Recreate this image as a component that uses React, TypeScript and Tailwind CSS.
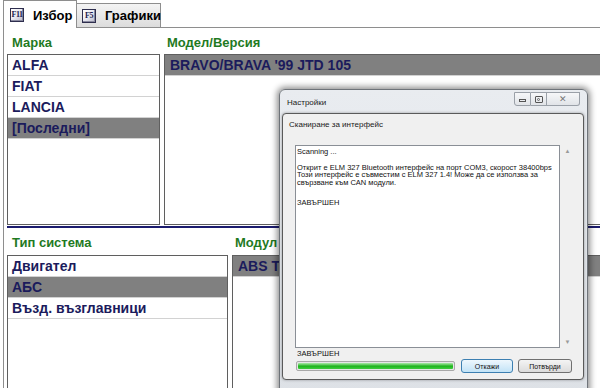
import React from "react";

const Row = ({ label, sel, pl }: { label: string; sel?: boolean; pl?: string }) => (
  <div
    className={`h-[21px] shrink-0 border-b border-[#d2d2d2] ${pl ?? "pl-[4px]"} text-[14px] font-bold leading-[21px] text-[#1b1b5c] whitespace-nowrap ${
      sel ? "bg-[#808080]" : "bg-white"
    }`}
  >
    {label}
  </div>
);

const KeyIcon = ({ k }: { k: string }) => (
  <div className="flex h-[14px] w-[14px] shrink-0 items-center justify-center border border-[#2e2e4e] bg-linear-to-br from-[#ffffff] via-[#e8e8f0] to-[#b8b8c8] shadow-[inset_-1px_-1px_0_#8a8aa0] text-[8px] font-bold leading-none tracking-[-0.5px] text-[#1b1b4c] font-['Liberation_Serif',serif]">
    {k}
  </div>
);

export default function App() {
  return (
    <div className="relative h-[388px] w-[600px] overflow-hidden bg-white font-['Liberation_Sans',Arial,sans-serif]">
      {/* Tabs */}
      <div className="flex h-[28px] items-end pl-[3px]">
        <div className="relative z-10 flex h-[28px] w-[74px] items-center gap-[9px] border border-b-0 border-[#8e8e8e] bg-white pl-[6px] pt-[1px]">
          <KeyIcon k="F11" />
          <span className="text-[13px] font-bold leading-none text-black">Избор</span>
        </div>
        <div className="flex h-[25px] w-[84px] items-center gap-[9px] border border-l-0 border-[#8e8e8e] bg-linear-to-b from-[#f4f4f4] to-[#dcdcdc] pl-[5px]">
          <KeyIcon k="F5" />
          <span className="text-[13px] font-bold leading-none text-black">Графики</span>
        </div>
        <div className="h-[1px] flex-1 bg-[#8e8e8e]" />
      </div>

      {/* Main panel */}
      <div className="ml-[3px] h-[360px] border-l border-[#8e8e8e] pl-[3px]">
        {/* Top section */}
        <div className="grid grid-cols-[153px_1fr] gap-x-[4px]">
          <div className="h-[26px] pl-[5px] pt-[7px] text-[13px] font-bold leading-[15px] text-[#1f7a1f]">Марка</div>
          <div className="h-[26px] pl-[3px] pt-[7px] text-[13px] font-bold leading-[15px] text-[#1f7a1f]">Модел/Версия</div>
          <div className="flex h-[171px] flex-col border border-[#5f5f5f] bg-white">
            <Row label="ALFA" />
            <Row label="FIAT" />
            <Row label="LANCIA" />
            <Row label="[Последни]" sel />
          </div>
          <div className="flex h-[171px] flex-col border border-r-0 border-[#5f5f5f] bg-white">
            <Row label="BRAVO/BRAVA '99 JTD 105" sel pl="pl-[5px]" />
          </div>
        </div>

        <div className="mt-[1px] h-[2px] bg-[#1c1c6e]" />

        {/* Bottom section */}
        <div className="grid grid-cols-[221px_1fr] gap-x-[4px]">
          <div className="h-[27px] pl-[5px] pt-[7px] text-[13px] font-bold leading-[15px] text-[#1f7a1f]">Тип система</div>
          <div className="h-[27px] pl-[3px] pt-[7px] text-[13px] font-bold leading-[15px] text-[#1f7a1f]">Модул</div>
          <div className="flex h-[140px] flex-col border border-[#5f5f5f] bg-white">
            <Row label="Двигател" />
            <Row label="АБС" sel />
            <Row label="Възд. възглавници" />
          </div>
          <div className="flex h-[140px] flex-col border border-r-0 border-[#5f5f5f] bg-white">
            <Row label="ABS TRW" sel pl="pl-[5px]" />
          </div>
        </div>
      </div>

      {/* Outer window: Настройки */}
      <div className="absolute left-[279px] top-[89px] h-[310px] w-[309px] rounded-t-[6px] border border-[#6f747a] bg-linear-to-b from-[#e9ecf0] to-[#dde1e6] shadow-[0_0_6px_2px_rgba(0,0,0,0.45)]">
        <div className="flex h-[23px] items-start justify-between">
          <span className="pl-[7px] pt-[8px] text-[8px] leading-[9px] text-[#1a1a1a]">Настройки</span>
          <div className="mr-[7px] mt-[2px] flex h-[14px]">
            <div className="flex w-[17px] items-center justify-center rounded-bl-[3px] border border-[#9aa0a8] bg-linear-to-b from-[#f6f7f9] to-[#e1e4e8]">
              <div className="mt-[3px] h-[3px] w-[7px] border border-[#555]" />
            </div>
            <div className="flex w-[16px] items-center justify-center border border-l-0 border-[#9aa0a8] bg-linear-to-b from-[#f6f7f9] to-[#e1e4e8]">
              <div className="flex h-[7px] w-[8px] items-center justify-center rounded-[1px] border border-[#555]">
                <div className="h-[3px] w-[3px] rounded-full border border-[#666]" />
              </div>
            </div>
            <div className="flex w-[33px] items-center justify-center rounded-br-[3px] border border-l-0 border-[#9aa0a8] bg-linear-to-b from-[#f6f7f9] to-[#e1e4e8] text-[9px] leading-none text-[#777]">
              ✕
            </div>
          </div>
        </div>

        {/* Inner dialog */}
        <div className="ml-[2px] flex h-[267px] w-[302px] flex-col rounded-[4px] border border-[#5a5a5a] bg-[#f0f0f0] shadow-[0_0_3px_rgba(0,0,0,0.35)]">
          <div className="h-[31px] shrink-0 pl-[6px] pt-[6px] text-[8px] leading-[10px] text-[#1a1a1a]">
            Сканиране за интерфейс
          </div>
          <div className="flex pl-[12px]">
            <div className="h-[203px] w-[265px] overflow-hidden border border-[#8a8f96] bg-white pl-[1px] pt-[2px] text-[7.5px] leading-[7.8px] text-[#111] whitespace-nowrap">
              <div>Scanning ...</div>
              <div>&nbsp;</div>
              <div>Открит е ELM 327 Bluetooth интерфейс на порт COM3, скорост 38400bps</div>
              <div>Този интерфейс е съвместим с ELM 327 1.4! Може да се използва за</div>
              <div>свързване към CAN модули.</div>
              <div className="mt-[12px]">ЗАВЪРШЕН</div>
            </div>
            <div className="flex h-[203px] w-[15px] flex-col items-center justify-between py-[3px] text-[6px] leading-none text-[#9a9a9a]">
              <span>▲</span>
              <span>▼</span>
            </div>
          </div>
          <div className="mt-[2px] pl-[14px] text-[7.5px] leading-[8px] text-[#111]">ЗАВЪРШЕН</div>
          <div className="mt-[1px] flex items-center pl-[13px]">
            <div className="h-[10px] w-[159px] rounded-[2px] border border-[#a8a8a8] bg-[#e6e6e6] p-[1px]">
              <div className="h-full w-full rounded-[1px] bg-linear-to-b from-[#a6eba6] via-[#17b417] to-[#3fcc3f]" />
            </div>
            <div className="ml-[6px] flex h-[14px] w-[52px] items-center justify-center rounded-[3px] border border-[#3c7fb1] bg-linear-to-b from-[#eef7fd] to-[#c2e3f7] text-[7px] leading-none text-[#111]">
              Откажи
            </div>
            <div className="ml-[5px] flex h-[14px] w-[54px] items-center justify-center rounded-[3px] border border-[#707070] bg-linear-to-b from-[#f4f4f4] to-[#dcdcdc] text-[7px] leading-none text-[#111]">
              Потвърди
            </div>
          </div>
        </div>
      </div>
    </div>
  );
}
